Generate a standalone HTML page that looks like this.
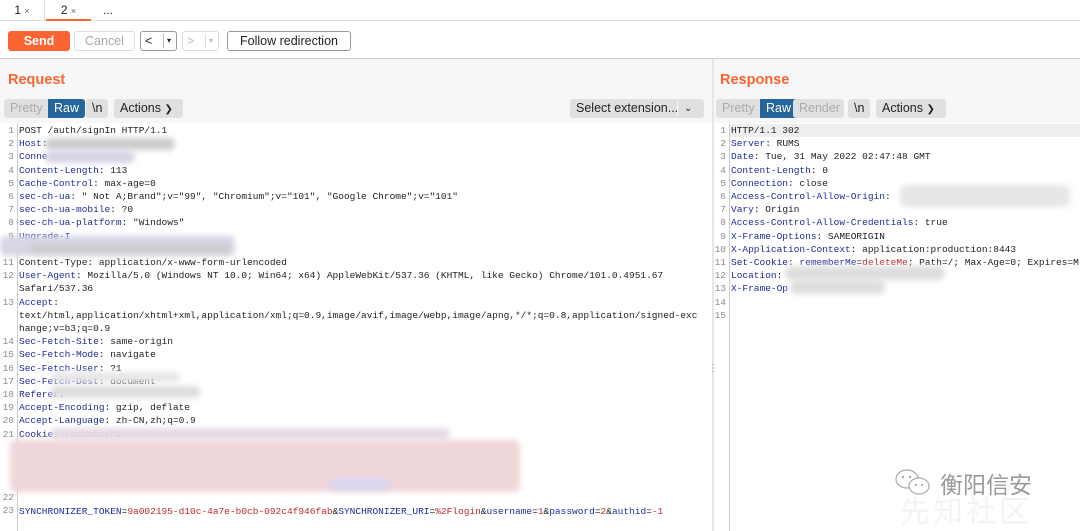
<!DOCTYPE html>
<html><head><meta charset="utf-8"><style>
*{box-sizing:border-box;margin:0;padding:0}
body{width:1080px;height:531px;overflow:hidden;background:#fff;font-family:"Liberation Sans",sans-serif;position:relative;color:#222}
.abs{position:absolute}
.tab{position:absolute;top:0;height:21px;font-size:12px;line-height:21px;text-align:center}
.btn{position:absolute;height:20px;border:1px solid #bbb;border-radius:3px;background:#fff;font-size:12.5px;line-height:18px;text-align:center}
.seg{position:absolute;top:99px;height:19px;background:#e0e0e0;border-radius:3px;font-size:12.5px;line-height:19px;padding:0 6px}
.code{position:absolute;font-family:"Liberation Mono",monospace;font-size:9.5px;line-height:13.2px;white-space:pre;color:#222}
.k{color:#1e2c9b}.r{color:#c2272d}
.num{position:absolute;font-family:"Liberation Mono",monospace;font-size:9.5px;line-height:13.2px;text-align:right;color:#888;white-space:pre}
.blur{position:absolute;filter:blur(3px);border-radius:6px}
</style></head><body>
<div class="abs" style="left:0;top:0;width:1080px;height:21px;background:#fff;border-bottom:1px solid #ddd"></div>
<div class="tab" style="left:0;width:45px;border-right:1px solid #ddd">1 <span style="font-size:9px;color:#666">×</span></div>
<div class="tab" style="left:46px;width:45px;border-bottom:2px solid #f63">2 <span style="font-size:9px;color:#666">×</span></div>
<div class="tab" style="left:92px;width:32px;border-bottom:1px solid #ddd">...</div>
<div class="abs" style="left:0;top:22px;width:1080px;height:37px;background:#fff;border-bottom:1px solid #ccc"></div>
<div class="btn" style="left:8px;top:31px;width:62px;background:#f96432;border-color:#f96432;color:#fff;font-weight:bold">Send</div>
<div class="btn" style="left:74px;top:31px;width:61px;color:#aaa;border-color:#ddd">Cancel</div>
<div class="btn" style="left:140px;top:31px;width:37px;text-align:left;padding-left:4px;border-color:#999">&lt;<span style="position:absolute;left:22px;top:2px;height:14px;border-left:1px solid #bbb"></span><span style="position:absolute;left:26px;font-size:8px">▾</span></div>
<div class="btn" style="left:182px;top:31px;width:37px;text-align:left;padding-left:4px;color:#bbb;border-color:#ddd">&gt;<span style="position:absolute;left:22px;top:2px;height:14px;border-left:1px solid #ddd"></span><span style="position:absolute;left:26px;font-size:8px">▾</span></div>
<div class="btn" style="left:227px;top:31px;width:124px;border-color:#999">Follow redirection</div>
<div class="abs" style="left:0;top:59px;width:1080px;height:64px;background:#f7f7f7"></div>
<div class="abs" style="left:712px;top:59px;width:2px;height:472px;background:#e6e6e6"></div>
<div class="abs" style="left:8px;top:72px;font-size:14.5px;font-weight:bold;color:#f96432">Request</div>
<div class="abs" style="left:720px;top:72px;font-size:14.5px;font-weight:bold;color:#f96432">Response</div>
<div class="seg" style="left:4px;color:#aaa;border-radius:3px 0 0 3px">Pretty</div>
<div class="seg" style="left:48px;background:#25669d;color:#fff;border-radius:0 3px 3px 0">Raw</div>
<div class="seg" style="left:86px">\n</div>
<div class="seg" style="left:114px;width:69px">Actions <span style="font-size:10px">&#10095;</span></div>
<div class="seg" style="left:570px;width:134px">Select extension... <span style="position:absolute;left:107px;top:3px;height:13px;border-left:1px solid #fff"></span><span style="position:absolute;left:114px;font-size:10px">⌄</span></div>
<div class="seg" style="left:716px;color:#aaa">Pretty</div>
<div class="seg" style="left:760px;background:#25669d;color:#fff;border-radius:0">Raw</div>
<div class="seg" style="left:793px;color:#aaa;width:51px">Render</div>
<div class="seg" style="left:848px">\n</div>
<div class="seg" style="left:876px;width:70px">Actions <span style="font-size:10px">&#10095;</span></div>
<div class="abs" style="left:0;top:123px;width:712px;height:408px;background:#fff"></div>
<div class="abs" style="left:17px;top:123px;height:408px;border-left:1px solid #ccc"></div>
<div class="abs" style="left:729px;top:123px;height:408px;border-left:1px solid #ccc"></div>
<div class="abs" style="left:730px;top:124px;width:350px;height:13px;background:#eee"></div>
<div class="num" style="left:0;top:124px;width:14px">1
2
3
4
5
6
7
8
9
10
11
12

13


14
15
16
17
18
19
20
21</div>
<div class="num" style="left:0;top:491px;width:14px">22
23</div>
<div class="code" style="left:19px;top:124px">POST /auth/signIn HTTP/1.1
<span class="k">Host</span>:
<span class="k">Conne</span>
<span class="k">Content-Length</span>: 113
<span class="k">Cache-Control</span>: max-age=0
<span class="k">sec-ch-ua</span>: " Not A;Brand";v="99", "Chromium";v="101", "Google Chrome";v="101"
<span class="k">sec-ch-ua-mobile</span>: ?0
<span class="k">sec-ch-ua-platform</span>: "Windows"
<span class="k">Upgrade-I</span>
  
Content-Type: application/x-www-form-urlencoded
<span class="k">User-Agent</span>: Mozilla/5.0 (Windows NT 10.0; Win64; x64) AppleWebKit/537.36 (KHTML, like Gecko) Chrome/101.0.4951.67
Safari/537.36
<span class="k">Accept</span>:
text/html,application/xhtml+xml,application/xml;q=0.9,image/avif,image/webp,image/apng,*/*;q=0.8,application/signed-exc
hange;v=b3;q=0.9
<span class="k">Sec-Fetch-Site</span>: same-origin
<span class="k">Sec-Fetch-Mode</span>: navigate
<span class="k">Sec-Fetch-User</span>: ?1
<span class="k">Sec-Fetch-Dest</span>: document
<span class="k">Referer</span>:
<span class="k">Accept-Encoding</span>: gzip, deflate
<span class="k">Accept-Language</span>: zh-CN,zh;q=0.9
<span class="k">Cookie</span>: rememberMe</div>
<div class="code" style="left:19px;top:505px"><span class="k">SYNCHRONIZER_TOKEN</span>=<span class="r">9a002195-d10c-4a7e-b0cb-092c4f946fab</span>&amp;<span class="k">SYNCHRONIZER_URI</span>=<span class="r">%2Flogin</span>&amp;<span class="k">username</span>=<span class="r">1</span>&amp;<span class="k">password</span>=<span class="r">2</span>&amp;<span class="k">authid</span>=<span class="r">-1</span></div>
<div class="blur" style="left:45px;top:138px;width:130px;height:12px;background:#ccc"></div>
<div class="blur" style="left:45px;top:151px;width:90px;height:12px;background:#d4d4e6"></div>
<div class="blur" style="left:0;top:236px;width:235px;height:20px;background:#d6d6e4"></div>
<div class="blur" style="left:30px;top:245px;width:200px;height:8px;background:#ccc"></div>
<div class="blur" style="left:50px;top:386px;width:150px;height:12px;background:#ddd"></div>
<div class="blur" style="left:50px;top:372px;width:130px;height:10px;background:#e6e6e6"></div>
<div class="blur" style="left:50px;top:428px;width:400px;height:12px;background:#e5dbe6"></div>
<div class="blur" style="left:10px;top:440px;width:510px;height:52px;background:#efd6d8"></div>
<div class="blur" style="left:330px;top:478px;width:60px;height:12px;background:#d8d8f0"></div>
<div class="num" style="left:714px;top:124px;width:12px">1
2
3
4
5
6
7
8
9
10
11
12
13
14
15</div>
<div class="code" style="left:731px;top:124px">HTTP/1.1 302
<span class="k">Server</span>: RUMS
<span class="k">Date</span>: Tue, 31 May 2022 02:47:48 GMT
<span class="k">Content-Length</span>: 0
<span class="k">Connection</span>: close
<span class="k">Access-Control-Allow-Origin</span>: 
<span class="k">Vary</span>: Origin
<span class="k">Access-Control-Allow-Credentials</span>: true
<span class="k">X-Frame-Options</span>: SAMEORIGIN
<span class="k">X-Application-Context</span>: application:production:8443
<span class="k">Set-Cookie</span>: <span class="k">rememberMe</span>=<span class="r">deleteMe</span>; Path=/; Max-Age=0; Expires=M
<span class="k">Location</span>:
<span class="k">X-Frame-Op</span></div>
<div class="blur" style="left:900px;top:185px;width:170px;height:22px;background:#e6e6e6"></div>
<div class="blur" style="left:785px;top:266px;width:160px;height:14px;background:#ddd"></div>
<div class="blur" style="left:790px;top:280px;width:95px;height:14px;background:#ddd"></div>
<div class="abs" style="left:708px;top:363px;font-size:10px;color:#999">⋮</div>
<div class="abs" style="left:900px;top:487px;font-family:'Noto Sans CJK SC',sans-serif;font-size:30px;color:#f3f3f3;letter-spacing:3px">先知社区</div>
<svg class="abs" style="left:894px;top:468px" width="44" height="30" viewBox="0 0 44 30"><ellipse cx="13" cy="11" rx="11" ry="9" fill="#fff" stroke="#aaa" stroke-width="1.2"/><ellipse cx="25" cy="18" rx="10" ry="8" fill="#fff" stroke="#aaa" stroke-width="1.2"/><circle cx="9" cy="9" r="1.3" fill="#aaa"/><circle cx="16" cy="9" r="1.3" fill="#aaa"/><circle cx="22" cy="17" r="1.1" fill="#aaa"/><circle cx="28" cy="17" r="1.1" fill="#aaa"/></svg>
<div class="abs" style="left:940px;top:466px;font-family:'Noto Sans CJK SC',sans-serif;font-size:23px;color:#999">衡阳信安</div>
</body></html>
